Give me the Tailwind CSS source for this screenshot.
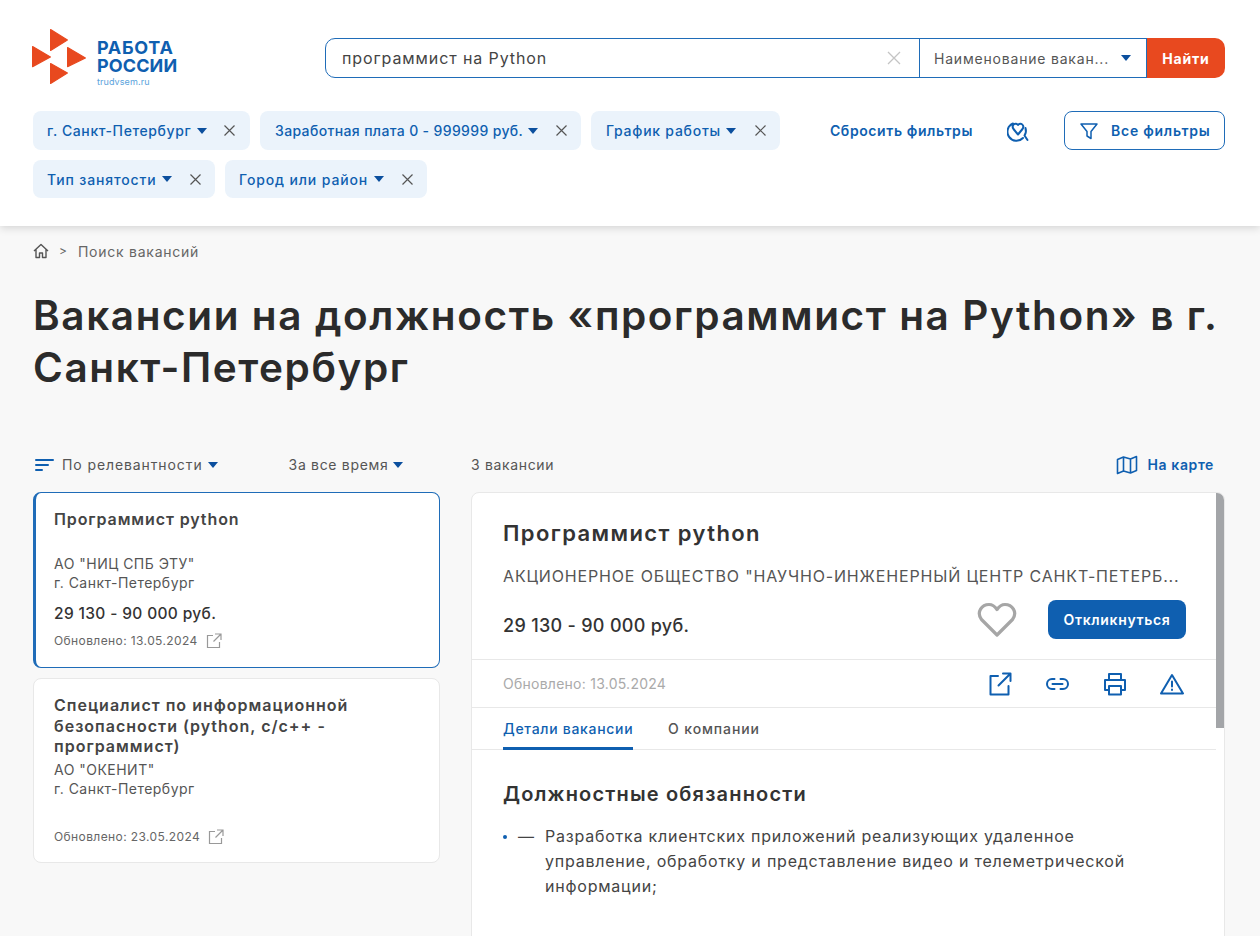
<!DOCTYPE html>
<html lang="ru"><head><meta charset="utf-8"><script src="https://cdn.jsdelivr.net/npm/@tailwindcss/browser@4"></script></head>
<body class="bg-[#f8f8f8] font-['Inter',sans-serif] text-[#333] h-[936px] overflow-hidden">
<header class="bg-white h-[226px] shadow-[0_2px_8px_rgba(0,0,0,0.15)] pl-[33px] pr-[35px] pt-[29px]">
  <div class="flex items-start h-[55px]">
    <div class="flex w-[292px] shrink-0">
      <svg class="w-[54px] h-[55px] -ml-px shrink-0" viewBox="0 0 54 55" fill="#e8491f" stroke="#e8491f" stroke-width="1.2" stroke-linejoin="round"><path d="M18.6 .6 35.4 11 18.6 21.4Z"/><path d="M.6 17.6 18.4 28 .6 37.6Z"/><path d="M35.6 18.6 53.4 29 35.6 37.6Z"/><path d="M18.6 34.6 35.4 44 18.6 54.4Z"/></svg>
      <div class="ml-[11px] pt-[10px] text-[#0f5fb0] font-bold text-[18px] leading-[18px]"><div class="tracking-[0.7px]">РАБОТА</div><div class="tracking-[0.1px]">РОССИИ</div><div class="mt-[1px] text-[9px] leading-[11px] font-normal text-[#5ba3dc] tracking-[0.1px]">trudvsem.ru</div></div>
    </div>
    <div class="mt-[9px] flex w-[900px] h-[40px]">
      <div class="flex-1 flex items-center border border-[#1f6cb8] rounded-l-[10px] pl-[16px] pr-[18px] bg-white"><span class="text-[16px] flex-1 text-[#444] tracking-[0.9px]">программист на Python</span><svg class="w-[14px] h-[14px]" viewBox="0 0 14 14" stroke="#c4c4c4" stroke-width="1.3"><path d="M1 1 13 13M13 1 1 13"/></svg></div>
      <div class="w-[228px] flex items-center border-y border-r border-l border-[#1f6cb8] -ml-px pl-[14px] pr-[15px]"><span class="text-[14px] text-[#555] flex-1 tracking-[0.8px] whitespace-nowrap">Наименование вакан...</span><svg class="w-[10px] h-[6px] shrink-0" viewBox="0 0 10 6" fill="#0b4f9e"><path d="M0 0H10L5 6Z"/></svg></div>
      <div class="w-[78px] flex items-center justify-center bg-[#e8491f] text-white font-bold text-[14px] tracking-[0.8px] rounded-r-[10px]">Найти</div>
    </div>
  </div>
  <div class="mt-[27px] flex justify-between items-start">
    <div class="w-[760px] flex flex-wrap gap-x-[10px] gap-y-[10px] text-[14px] font-medium text-[#0f5fb0]">
      <div class="h-[39px] pl-[14px] w-[217px] bg-[#ebf3fb] rounded-[8px] flex items-center whitespace-nowrap"><span class="tracking-[0.6px]">г. Санкт-Петербург</span><svg class="ml-[6px] w-[10px] h-[6px]" viewBox="0 0 10 6" fill="#0b4f9e"><path d="M0 0H10L5 6Z"/></svg><svg class="ml-[17px] w-[11px] h-[11px]" viewBox="0 0 11 11" stroke="#555" stroke-width="1.2"><path d="M.5.5l10 10M10.5.5l-10 10"/></svg></div>
      <div class="h-[39px] pl-[15px] w-[321px] bg-[#ebf3fb] rounded-[8px] flex items-center whitespace-nowrap"><span class="tracking-[0.36px]">Заработная плата 0 - 999999 руб.</span><svg class="ml-[5px] w-[10px] h-[6px]" viewBox="0 0 10 6" fill="#0b4f9e"><path d="M0 0H10L5 6Z"/></svg><svg class="ml-[18px] w-[11px] h-[11px]" viewBox="0 0 11 11" stroke="#555" stroke-width="1.2"><path d="M.5.5l10 10M10.5.5l-10 10"/></svg></div>
      <div class="h-[39px] pl-[15px] w-[189px] bg-[#ebf3fb] rounded-[8px] flex items-center whitespace-nowrap"><span class="tracking-[0.75px]">График работы</span><svg class="ml-[5px] w-[10px] h-[6px]" viewBox="0 0 10 6" fill="#0b4f9e"><path d="M0 0H10L5 6Z"/></svg><svg class="ml-[19px] w-[11px] h-[11px]" viewBox="0 0 11 11" stroke="#555" stroke-width="1.2"><path d="M.5.5l10 10M10.5.5l-10 10"/></svg></div>
      <div class="h-[38px] pl-[14px] w-[182px] bg-[#ebf3fb] rounded-[8px] flex items-center whitespace-nowrap"><span class="tracking-[0.85px]">Тип занятости</span><svg class="ml-[5px] w-[10px] h-[6px]" viewBox="0 0 10 6" fill="#0b4f9e"><path d="M0 0H10L5 6Z"/></svg><svg class="ml-[18px] w-[11px] h-[11px]" viewBox="0 0 11 11" stroke="#555" stroke-width="1.2"><path d="M.5.5l10 10M10.5.5l-10 10"/></svg></div>
      <div class="h-[38px] pl-[14px] w-[202px] bg-[#ebf3fb] rounded-[8px] flex items-center whitespace-nowrap"><span class="tracking-[0.87px]">Город или район</span><svg class="ml-[6px] w-[10px] h-[6px]" viewBox="0 0 10 6" fill="#0b4f9e"><path d="M0 0H10L5 6Z"/></svg><svg class="ml-[18px] w-[11px] h-[11px]" viewBox="0 0 11 11" stroke="#555" stroke-width="1.2"><path d="M.5.5l10 10M10.5.5l-10 10"/></svg></div>
    </div>
    <div class="flex items-center h-[39px] text-[14px] font-semibold text-[#0f5fb0]">
      <span class="whitespace-nowrap tracking-[0.6px]">Сбросить фильтры</span>
      <svg class="ml-[34px] w-[22px] h-[24px]" viewBox="0 0 22 24" fill="none" stroke="#0f5fb0" stroke-width="2" stroke-linecap="round" stroke-linejoin="round"><path d="M6 4.5 A9 9 0 1 0 16 19"/><path d="M11 15.5 L6.5 10 C4 6.5 8.5 2.5 11 6 C13.5 2.5 18 6.5 15.5 10Z"/><path d="M18.5 9 A9 9 0 0 1 17.5 16.5L20.5 21"/></svg>
      <div class="ml-[35px] w-[161px] h-[39px] border border-[#1f6cb8] rounded-[8px] flex items-center pl-[15px]"><svg class="w-[18px] h-[18px]" viewBox="0 0 18 18" fill="none" stroke="#0f5fb0" stroke-width="1.5" stroke-linejoin="round"><path d="M1 2H17L11 9.5V16.5L7 14V9.5Z"/></svg><span class="ml-[13px] tracking-[0.75px]">Все фильтры</span></div>
    </div>
  </div>
</header>
<main class="pl-[33px] pr-[35px]">
  <div class="pt-[14px] flex items-center h-[36px] text-[14px] text-[#666]">
    <svg class="w-[16px] h-[16px]" viewBox="0 0 16 16" fill="none" stroke="#555" stroke-width="1.4" stroke-linejoin="round"><path d="M1 8 8 1.5 15 8M3 6.5V14.5H6.5V10H9.5V14.5H13V6.5"/></svg>
    <span class="ml-[10px] text-[12px]">&gt;</span><span class="ml-[11px] tracking-[0.75px]">Поиск вакансий</span>
  </div>
  <h1 class="mt-[28px] w-[1195px] text-[40.5px] leading-[52px] font-semibold text-[#2b2b2b] tracking-[1.6px]">Вакансии на должность «программист на Python» в г. Санкт-Петербург</h1>
  <div class="mt-[51px] flex gap-[31px]">
    <aside class="w-[407px] shrink-0">
      <div class="h-[39px] flex items-center text-[14px] text-[#555]">
        <svg class="ml-[2px] w-[19px] h-[14px]" viewBox="0 0 19 14" stroke="#0f5fb0" stroke-width="2" stroke-linecap="round"><path d="M1 2H18M1 7H13M1 12H7"/></svg>
        <span class="ml-[8px] tracking-[0.9px]">По релевантности</span><svg class="ml-[5px] w-[10px] h-[6px]" viewBox="0 0 10 6" fill="#0b4f9e"><path d="M0 0H10L5 6Z"/></svg>
        <span class="ml-[71px] tracking-[0.68px]">За все время</span><svg class="ml-[5px] w-[10px] h-[6px]" viewBox="0 0 10 6" fill="#0b4f9e"><path d="M0 0H10L5 6Z"/></svg>
      </div>
      <div class="mt-[8px] h-[176px] bg-white rounded-[8px] border border-[#1f6cb8] border-l-[3px] pl-[18px] pt-[16px]">
        <div class="text-[16px] leading-[20px] font-semibold text-[#444] tracking-[0.9px]">Программист python</div>
        <div class="mt-[25px] text-[14px] leading-[19px] text-[#555] tracking-[0.48px]">АО "НИЦ СПБ ЭТУ"<br>г. Санкт-Петербург</div>
        <div class="mt-[12px] text-[15.5px] leading-[20px] font-medium text-[#333] tracking-[0.35px]">29 130 - 90 000 руб.</div>
        <div class="mt-[9px] flex items-center text-[12px] leading-[16px] text-[#666] tracking-[0.4px]">Обновлено: 13.05.2024<svg class="ml-[8px] w-[16px] h-[16px]" viewBox="0 0 16 16" fill="none" stroke="#999" stroke-width="1.2"><path d="M7 2.5H1.5V14.5H13.5V9M9 1H15V7M15 1 7.5 8.5"/></svg></div>
      </div>
      <div class="mt-[10px] h-[185px] bg-white rounded-[8px] border border-[#e8e8e8] pl-[20px] pt-[16px]">
        <div class="text-[16px] leading-[20.5px] font-semibold text-[#444] w-[320px] tracking-[1px]">Специалист по информационной безопасности (python, с/с++ - программист)</div>
        <div class="mt-[3px] text-[14px] leading-[19px] text-[#555] tracking-[0.48px]">АО "ОКЕНИТ"<br>г. Санкт-Петербург</div>
        <div class="mt-[31px] flex items-center text-[12px] leading-[16px] text-[#666] tracking-[0.4px]">Обновлено: 23.05.2024<svg class="ml-[8px] w-[16px] h-[16px]" viewBox="0 0 16 16" fill="none" stroke="#999" stroke-width="1.2"><path d="M7 2.5H1.5V14.5H13.5V9M9 1H15V7M15 1 7.5 8.5"/></svg></div>
      </div>
    </aside>
    <section class="flex-1 min-w-0">
      <div class="h-[39px] flex items-center justify-between">
        <span class="text-[14px] text-[#555] tracking-[0.65px]">3 вакансии</span>
        <div class="flex items-center mr-[11px] text-[14px] font-semibold text-[#0f5fb0] tracking-[0.6px]"><svg class="w-[22px] h-[20px]" viewBox="0 0 22 20" fill="none" stroke="#0f5fb0" stroke-width="1.6" stroke-linejoin="round"><path d="M1.5 4.5 7.5 2 14.5 4 20.5 1.5V15.5L14.5 18 7.5 16 1.5 18.5ZM7.5 2V16M14.5 4V18"/></svg><span class="ml-[10px]">На карте</span></div>
      </div>
      <div class="mt-[8px] h-[460px] bg-white rounded-t-[8px] border border-[#e8e8e8] flex overflow-hidden">
        <div class="flex-1 min-w-0">
          <div class="h-[166px] pl-[31px] pr-[30px] pt-[26px]">
            <div class="text-[22px] leading-[28px] font-semibold text-[#333] tracking-[1.4px]">Программист python</div>
            <div class="mt-[17px] text-[16px] leading-[24px] text-[#555] whitespace-nowrap overflow-hidden tracking-[0.84px]">АКЦИОНЕРНОЕ ОБЩЕСТВО "НАУЧНО-ИНЖЕНЕРНЫЙ ЦЕНТР САНКТ-ПЕТЕРБ...</div>
            <div class="mt-[12px] flex items-center">
              <div class="text-[18px] leading-[26px] font-medium flex-1 pt-[12px] tracking-[0.3px]">29 130 - 90 000 руб.</div>
              <svg class="w-[40px] h-[36px]" viewBox="0 0 40 36" fill="none" stroke="#a6a6a6" stroke-width="3.2" stroke-linejoin="round"><path d="M20 33 L4.5 17.5 C-1 10 5 2.5 12 2.5 C15.5 2.5 18 4.5 20 7.5 C22 4.5 24.5 2.5 28 2.5 C35 2.5 41 10 35.5 17.5Z"/></svg>
              <div class="ml-[31px] w-[138px] h-[39px] bg-[#0f5fb0] rounded-[8px] text-white text-[14px] font-semibold flex items-center justify-center tracking-[0.65px]">Откликнуться</div>
            </div>
          </div>
          <div class="h-[49px] border-y border-[#e8e8e8] flex items-center pl-[31px] pr-[32px]">
            <span class="flex-1 text-[14px] text-[#aaa] tracking-[0.25px]">Обновлено: 13.05.2024</span>
            <div class="flex items-center gap-[33px]">
              <svg class="w-[24px] h-[24px]" viewBox="0 0 24 24" fill="none" stroke="#0f5fb0" stroke-width="2" stroke-linejoin="round" stroke-linecap="round"><path d="M10 4H2.5V22.5H20.5V14M15 1.5H22.5V9M22.5 1.5 10.5 13.5"/></svg>
              <svg class="w-[25px] h-[14px]" viewBox="0 0 25 14" fill="none" stroke="#0f5fb0" stroke-width="2" stroke-linecap="round"><path d="M9.5 2H7A5 5 0 0 0 7 12H9.5M15.5 2H18A5 5 0 0 1 18 12H15.5M7.5 7H17.5"/></svg>
              <svg class="w-[24px] h-[24px]" viewBox="0 0 24 24" fill="none" stroke="#0f5fb0" stroke-width="2" stroke-linejoin="round"><path d="M6 8V2H18V8M6 18H2V8H22V18H18M6 14H18V22.5H6Z"/></svg>
              <svg class="w-[24px] h-[22px]" viewBox="0 0 24 22" fill="none" stroke="#0f5fb0" stroke-width="2" stroke-linejoin="round" stroke-linecap="round"><path d="M12 2 23 20.5H1ZM12 8.5V13.5M12 16.5V17"/></svg>
            </div>
          </div>
          <div class="h-[42px] border-b border-[#e8e8e8] flex pl-[31px] text-[14px] text-[#555] font-medium">
            <div class="h-[42px] flex items-center border-b-[3px] border-[#0f5fb0] text-[#0f5fb0] w-[130px] tracking-[0.7px] whitespace-nowrap pt-[2px]">Детали вакансии</div>
            <div class="ml-[35px] h-[42px] flex items-center pb-[1px] tracking-[0.9px] whitespace-nowrap">О компании</div>
          </div>
          <div class="pl-[31px] pt-[30px]">
            <h2 class="text-[20px] leading-[28px] font-semibold text-[#333] tracking-[1.17px]">Должностные обязанности</h2>
            <div class="mt-[16px] flex text-[16px] leading-[25px] text-[#444]">
              <span class="w-[42px] shrink-0 flex items-start"><span class="mt-[11px] w-[4px] h-[4px] rounded-full bg-[#0f5fb0]"></span><span class="ml-[11px]">—</span></span>
              <div class="w-[590px] tracking-[0.78px]">Разработка клиентских приложений реализующих удаленное управление, обработку и представление видео и телеметрической информации;</div>
            </div>
          </div>
        </div>
        <div class="w-[8px] shrink-0"><div class="h-[235px] bg-[#a3a5a8]"></div></div>
      </div>
    </section>
  </div>
</main>
</body></html>
